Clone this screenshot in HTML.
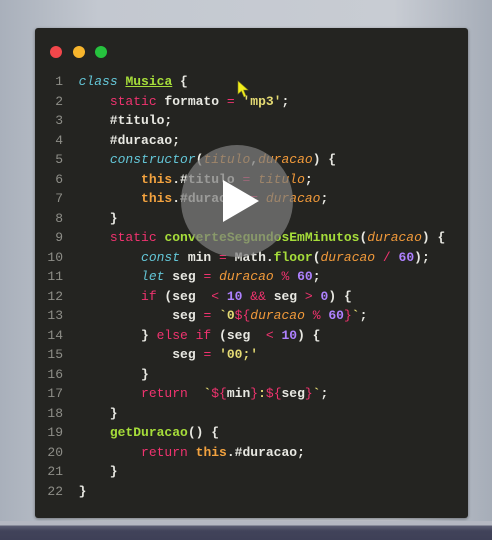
<!DOCTYPE html>
<html><head><meta charset="utf-8"><style>
html,body{margin:0;padding:0}
body{width:492px;height:540px;overflow:hidden;position:relative;background:linear-gradient(90deg,#a9b0bb 0%,#c3c8d0 20%,#c8ccd3 80%,#a6adb8 100%)}
.band{position:absolute;left:0;top:521px;width:492px;height:19px;background:linear-gradient(#b5b8c2 0,#b5b8c2 4px,#5b5d72 5px,#41435a 10px,#3e4057 19px)}
.card{position:absolute;left:35px;top:28px;width:433px;height:490px;background:#242421;border-radius:3px;box-shadow:0 1px 3px rgba(0,0,0,.4)}
.dot{position:absolute;top:46px;width:12px;height:12px;border-radius:50%}
pre{position:absolute;left:21px;top:72px;margin:0;font-family:"Liberation Mono",monospace;font-size:13px;line-height:19.52px;color:#e8e8e2;font-weight:bold}
.n{display:inline-block;width:42px;text-align:right;color:#8e8e88;font-weight:normal}
.c{color:#63c5d6;font-style:italic;font-weight:normal}
.g{color:#a6dd3a}
.p{color:#f0336f;font-weight:normal}
.y{color:#e5db74}
.o{color:#f29a3a;font-style:italic;font-weight:normal}
.t{color:#f2a23f}
.v{color:#ae81ff}
.play{position:absolute;left:181px;top:145px;width:112px;height:112px;border-radius:50%;background:rgba(125,125,125,.72)}
</style></head><body>
<div class="card"></div>
<div class="dot" style="left:50px;background:#f2474b"></div>
<div class="dot" style="left:73px;background:#f7b52c"></div>
<div class="dot" style="left:95px;background:#26c23e"></div>
<pre><span class="n">1</span>  <span class="c">class</span> <span class="g" style="text-decoration:underline">Musica</span> {
<span class="n">2</span>      <span class="p">static</span> formato <span class="p">=</span> <span class="y">'mp3'</span>;
<span class="n">3</span>      #titulo;
<span class="n">4</span>      #duracao;
<span class="n">5</span>      <span class="c">constructor</span>(<span class="o">titulo</span>,<span class="o">duracao</span>) {
<span class="n">6</span>          <span class="t">this</span>.#titulo <span class="p">=</span> <span class="o">titulo</span>;
<span class="n">7</span>          <span class="t">this</span>.#duracao <span class="p">=</span> <span class="o">duracao</span>;
<span class="n">8</span>      }
<span class="n">9</span>      <span class="p">static</span> <span class="g">converteSegundosEmMinutos</span>(<span class="o">duracao</span>) {
<span class="n">10</span>          <span class="c">const</span> min <span class="p">=</span> Math.<span class="g">floor</span>(<span class="o">duracao</span> <span class="p">/</span> <span class="v">60</span>);
<span class="n">11</span>          <span class="c">let</span> seg <span class="p">=</span> <span class="o">duracao</span> <span class="p">%</span> <span class="v">60</span>;
<span class="n">12</span>          <span class="p">if</span> (seg  <span class="p">&lt;</span> <span class="v">10</span> <span class="p">&amp;&amp;</span> seg <span class="p">&gt;</span> <span class="v">0</span>) {
<span class="n">13</span>              seg <span class="p">=</span> <span class="y">`0</span><span class="p">${</span><span class="o">duracao</span> <span class="p">%</span> <span class="v">60</span><span class="p">}</span><span class="y">`</span>;
<span class="n">14</span>          } <span class="p">else if</span> (seg  <span class="p">&lt;</span> <span class="v">10</span>) {
<span class="n">15</span>              seg <span class="p">=</span> <span class="y">'00;'</span>
<span class="n">16</span>          }
<span class="n">17</span>          <span class="p">return</span>  <span class="y">`</span><span class="p">${</span>min<span class="p">}</span><span class="y">:</span><span class="p">${</span>seg<span class="p">}</span><span class="y">`</span>;
<span class="n">18</span>      }
<span class="n">19</span>      <span class="g">getDuracao</span>() {
<span class="n">20</span>          <span class="p">return</span> <span class="t">this</span>.#duracao;
<span class="n">21</span>      }
<span class="n">22</span>  }</pre>
<div class="play"><svg width="112" height="112" viewBox="0 0 112 112"><path d="M42 35 L78 56 L42 77 Z" fill="#fff"/></svg></div>
<svg style="position:absolute;left:237px;top:80px" width="14" height="18" viewBox="0 0 14 18"><path d="M1 1 L1 14 L4.5 11 L7 17 L9 16 L6.5 10 L11 10 Z" fill="#f2ee1a" stroke="#8a8a20" stroke-width=".6"/></svg>
<div class="band"></div>
</body></html>
